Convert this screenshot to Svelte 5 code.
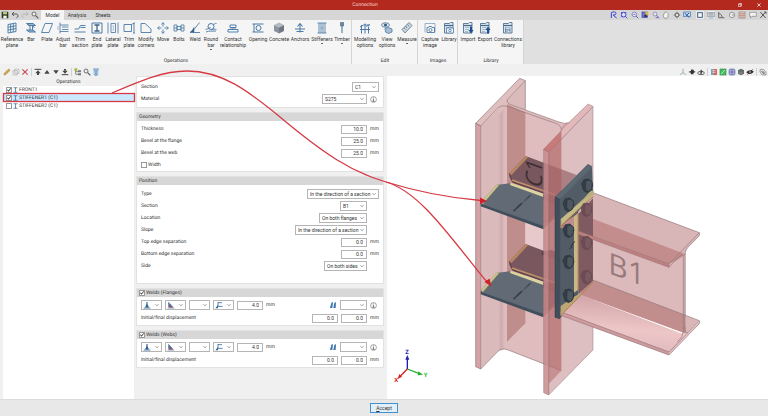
<script>
  const B = '#4b7ba6';
  const s = (d, w = 1.8, c = B, fill = 'none') =>
    `<path d="${d}" fill="${fill}" stroke="${c}" stroke-width="${w}" stroke-linejoin="round"/>`;
  const doc = s('M3 3h10l2-2h5v21H3z', 1.8, '#55738f', '#dfe9f2') + s('M3 7h17', 2.4, '#44698c') + s('M6 11h9M6 15h8M6 19h6', 1.2, '#7f9ab3');

  const icons = {
    ref: s('M4 5l16-3v17L4 22zM9.300 4v17M14.600 3v17M4 10.500l16-3M4 16l16-3', 1.9),
    bar: s('M3 3h13l5 4H8zM10 7v9M15 7v9M3 16h13l5 4H8zM5 5l5 3M16 9l3 2', 2, B, '#9db8cf'),
    plate: s('M8 3h15l-7 18H1z'),
    adjust: s('M6 1v22M6 6h17M10 10h13M10 15h13M6 19h17', 1.7) + s('M2 8v8', 1.4, '#86a6c3'),
    trimSection: s('M1 14h8l4-7h10M1 20h22M13 11h10', 1.9),
    endPlate: s('M2 2h20v20H2z', 2) + s('M7 6h10M12 6v12M7 18h10', 2.6, '#3d6486'),
    lateral: s('M2 1v22M22 1v22M8 3v18M17 3v18M8 3h9M8 21h9', 1.7) + s('M12.500 6v12', 1.4, '#86a6c3'),
    trimPlate: s('M2 5h15v14H2zM17 5l5-3v20M22 2h2M20 22h4'),
    modify: s('M2 21V3h8l12 11v7z'),
    move: s('M12 2v20M2 12h20M9 5l3-4 3 4M9 19l3 4 3-4M5 9l-4 3 4 3M19 9l4 3-4 3', 1.7) + '<circle cx="12" cy="12" r="3" fill="#f5f5f5"/>',
    bolts: s('M2 6h6v12H2zM2 12h6M8 9h8v6H8zM16 6h6v12h-6zM16 12h6', 1.7),
    weld: s('M21 1L10 15M2 21h20', 1.8) + s('M10 11v9H3l4-4z', 1, '#345f86', '#345f86'),
    round: s('M1 15c5-2 7-1 10-5M13 16c4-2 6-2 10-1M2 20c7-3 10-1 20-2M17 6c2-3 3-4 6-3', 1.8) + '<circle cx="12" cy="9" r="6" fill="none" stroke="#4b7ba6" stroke-width="2"/>',
    contact: s('M6 6h12v5H6zM2 15h20v5H2zM12 11v4', 1.9) + s('M6 13h12', 1.2, '#8daac4'),
    opening: s('M1 4h22M1 20h22M4 4v16', 2) + '<circle cx="13" cy="12" r="5" fill="none" stroke="#4b7ba6" stroke-width="2"/>',
    concrete: '<path d="M12 1l10 5-10 5L2 6z" fill="#b5bbc1"/><path d="M2 6l10 5v12L2 18z" fill="#8c959e"/><path d="M22 6l-10 5v12l10-5z" fill="#6f7983"/>',
    anchors: s('M12 3v18M2 14h20M7 9l5-6 5 6M5 19h14', 2.1),
    stiff: s('M3 2h18M3 22h18M6 2v20M18 2v20M10 2v20M14 2v20', 1.7) + s('M10 12h4', 1.5),
    timber: s('M9 1h6v7H9z', 1.6, '#5b7690', '#6f8aa3') + s('M12 8v14', 2.2),
    modelling: s('M5 23V6M12 23V3M19 23V9M2 10l7-4M9 6h13M2 15h20M15 9l6-4', 2),
    view: '<ellipse cx="9" cy="6" rx="8" ry="4.500" fill="#dbe6ef" stroke="#4b6f91" stroke-width="1.500"/><circle cx="9" cy="6" r="3" fill="#35597b"/>' + s('M8 13l7-2 7 3v6l-7 3-6-3z', 1.6, B, '#a8c0d5'),
    measure: s('M2 15L16 1l6 6L8 22zM6 12l3 3M9 8l3 4M13 5l3 3', 1.9, '#6f8799', '#c9d5df'),
    capture: s('M2 21V3h20v18', 1.5, '#7f9ab3') + s('M6 11h3l1-2h5l1 2h5v10H6z', 1.8) + '<circle cx="13" cy="16" r="3" fill="none" stroke="#4b7ba6" stroke-width="1.700"/>',
    lib: doc + s('M7 12h14v10H7zM11 12l2-2h3l2 2', 1.5, B, '#eef4f9') + '<circle cx="14" cy="17" r="2.500" fill="none" stroke="#4b7ba6" stroke-width="1.500"/>',
    import: doc + '<path d="M16 9h4v7h3l-5 7-5-7h3z" fill="#1f4f8c"/>',
    export: doc + '<path d="M16 23h4v-7h3l-5-7-5 7h3z" fill="#1f4f8c"/>',
    conn: doc + s('M7 11v10M16 11v10M7 16h9', 1.6),

    save: '<path d="M2 2h18l2 2v18H2z" fill="#2f3a1c"/><path d="M6 3h12v7H6z" fill="#b8c98a"/><path d="M7 14h10v8H7z" fill="#f3f3f3"/>',
    undo: s('M9 3L3 9l6 6M3 9h12c8 0 8 10 1 11', 2.6, '#454545'),
    redo: s('M15 3l6 6-6 6M21 9H9C1 9 1 19 8 20', 2, '#aaaaaa'),
    search: '<circle cx="9" cy="9" r="6" fill="#eee" stroke="#555" stroke-width="2.400"/>' + s('M14 14l8 8', 3.4, '#555'),
    zoomPrev: s('M4 21V5c6-4 14-3 14 2s-6 5-9 5l11 9', 3, '#3d3fd0'),
    zoomAll: '<circle cx="11" cy="11" r="7" fill="#d9e6ff" stroke="#4344c8" stroke-width="3"/>' + s('M3 3l4 4M19 3l-4 4M3 19l4-4M16 16l6 6', 2.4, '#3436d8'),
    zoomOut: '<circle cx="10" cy="10" r="7" fill="#eef" stroke="#66669c" stroke-width="2.200"/>' + s('M7 10h6M15 15l7 7', 2.4, '#4647b8'),
    zoomWin: '<rect x="3" y="3" width="16" height="16" fill="#6a76d8" stroke="#3334a8" stroke-width="2"/><path d="M13 2h9v11h-9z" fill="#e2b63d"/><path d="M8 16l7-7 3 10z" fill="#27273b"/>',
    zoomDyn: '<circle cx="9" cy="9" r="6" fill="#e3e3f4" stroke="#7a7aa0" stroke-width="2"/>' + s('M13 13l9 8M11 20h8', 2.4, '#5152c0'),
    hand: s('M6 21L3 12l3-1 1-7 3-1 2 1 3 0 3 3v9l-3 6z', 1.8, '#777', '#f2f2f2'),
    orbit: s('M12 2v20M2 12h20', 2, '#777') + '<circle cx="12" cy="12" r="6" fill="#ddd" stroke="#555" stroke-width="3"/>',
    redraw: '<rect x="2" y="3" width="20" height="14" fill="#bdd7ee" stroke="#4574a8" stroke-width="2"/>' + s('M5 6l14 14M18 6L9 15', 3, '#3258b5'),
    square: '<rect x="5" y="5" width="14" height="14" fill="#f6fbff" stroke="#4a6072" stroke-width="3"/>',
    keyboard: '<rect x="2" y="4" width="20" height="13" fill="#ddd" stroke="#8c979f" stroke-width="2"/>' + s('M5 8h14M5 12h14M4 21h16', 2, '#7c8993'),
    angle: s('M5 3v17h17M5 8c7 0 10 5 10 12', 2.6, '#5b5b5b'),
    clock: '<circle cx="12" cy="12" r="8" fill="#e9e9e9" stroke="#777" stroke-width="2"/>' + s('M12 12h6', 2, '#777'),
    table: '<rect x="3" y="3" width="18" height="18" fill="#e8dcd6" stroke="#8a7b75" stroke-width="2"/>' + s('M3 8h18M9 8v13M15 8v13M3 14h18', 2, '#b5806b'),
    comment: s('M2 4h20v12H9l-4 5v-5H2z', 1.8, '#777', '#f2f2f2'),
    tools: s('M4 3l16 18M20 3L4 21M16 3h5v5', 3, '#555'),
    pencil: s('M3 21l2-6L17 3l4 4L9 19z', 1.6, '#8a6d2b', '#d8ab3e'),
    copy: s('M8 3h13v13H8zM3 8h13v13H3z', 1.6, '#a2a2a2', '#ececec'),
    del: s('M4 4l16 16M20 4L4 20', 3.2, '#c8464e'),
    top: s('M2 4h20', 3, '#444') + '<path d="M12 7l8 9H4zM9 15h6v6H9z" fill="#444"/>',
    up: '<path d="M12 6l8 11H4z" fill="#444"/>',
    down: '<path d="M12 18l8-11H4z" fill="#444"/>',
    bottom: s('M2 20h20', 3, '#444') + '<path d="M12 17l8-9H4zM9 3h6v6H9z" fill="#444"/>',
    tree: s('M5 3v16h7M5 11h7', 2, '#5a6b3a') + '<path d="M1 1h9v7H1z" fill="#a8b53a"/><path d="M12 7h9v6h-9zM12 16h9v6h-9z" fill="#6d7a86"/>',
    filter: '<rect x="4" y="2" width="16" height="20" fill="#b8d5ee"/>' + s('M3 3h18M6 8h12M8 12h8M9 16h6v6H9z', 2.2, '#5b86b5'),
    beam: s('M4 3h16M12 3v18M4 21h16', 3.4, '#4b7ba6'),
    axes: s('M12 2v12l9 6M12 14l-9 6', 1.8, '#6c8893'),
    shadow: '<path d="M1 12l7-3 3-5 5 1 2 4 5 3-6 2-1 5H9l-1-5z" fill="#333"/>',
    eye: '<ellipse cx="12" cy="15" rx="10" ry="5" fill="none" stroke="#444" stroke-width="2.400"/><path d="M9 17l3-14 4 7-2 7z" fill="#444"/>',
    red: '<rect x="3" y="3" width="9" height="18" fill="#7fa3ae"/><rect x="12" y="3" width="9" height="18" fill="#e35c55"/>' + s('M7 8h10M7 13h10', 2, '#eee'),
    green: '<rect x="3" y="3" width="18" height="18" fill="#42bf5c" stroke="#3a8a62" stroke-width="2"/>' + s('M6 18L18 6', 3, '#a5f0a0'),
    violet: '<rect x="3" y="3" width="18" height="18" rx="4" fill="#a6abd6" stroke="#6a6da8" stroke-width="2"/>' + s('M3 12h18M12 3v18', 2, '#6a6da8'),
    cube: '<path d="M12 2l9 5v10l-9 5-9-5V7z" fill="#5d6a66"/><path d="M12 12l6-3v7l-6 3z" fill="#a5706f"/><path d="M5 9l6 3v6l-6-3z" fill="#5f93a6"/>',
    hide: '<path d="M1 13C5 5 18 5 23 10c-3 9-16 11-22 3z" fill="#333"/>' + s('M4 20L20 4', 2, '#222') + '<circle cx="12" cy="12" r="2.500" fill="#ddd"/>',
    history: s('M3 4h10l8 8v9H9L3 12z', 1.8, '#777', '#ddd') + s('M7 9l9 9M12 9v6h6', 2.2, '#666'),
    fillet: s('M12 3v18', 4, '#4b7ba6') + '<path d="M12 8l6 11H6z" fill="#2f5f92"/>' + s('M2 21h20', 3, '#4b7ba6'),
    weldType: '<path d="M4 2l15 17H4z" fill="#3f6d9c"/><path d="M8 12l10 8H7z" fill="#d14545"/>' + s('M2 21h20', 2.2, '#4b7ba6'),
    weldPos: s('M9 3v14M9 5h12M9 16h14', 2.6, '#3f73a5') + '<path d="M1 22l8-10v10z" fill="#2f5f92"/>',
    electrode: '<path d="M3 21L7 5l5-2-2 18zM13 21l3-15 5-3-1 18z" fill="#3e76ae"/>',
    info: '<circle cx="12" cy="12" r="10" fill="#fff" stroke="#555" stroke-width="1.800"/>' + s('M12 5v3M9 11h3v7M8 18h8', 2.2, '#444'),
  };

  const ribbon = [
    { name: 'Operations', items: [
      ['ref', 'Reference plane', 'w22'], ['bar', 'Bar', 'w16'], ['plate', 'Plate', 'w16'], ['adjust', 'Adjust bar', 'w16'],
      ['trimSection', 'Trim section', 'w18'], ['endPlate', 'End plate', 'w16'], ['lateral', 'Lateral plate', 'w16'],
      ['trimPlate', 'Trim plate', 'w16'], ['modify', 'Modify corners', 'w18'], ['move', 'Move', 'w16'], ['bolts', 'Bolts', 'w16'],
      ['weld', 'Weld', 'w16'], ['round', 'Round bar', 'w16', true], ['contact', 'Contact relationship', 'w28'],
      ['opening', 'Opening', 'w22'], ['concrete', 'Concrete', 'w20'], ['anchors', 'Anchors', 'w22'],
      ['stiff', 'Stiffeners', 'w22', true], ['timber', 'Timber', 'w18', true] ] },
    { name: 'Edit', items: [['modelling', 'Modelling options', 'w24'], ['view', 'View options', 'w20'], ['measure', 'Measure', 'w20', true]] },
    { name: 'Images', items: [['capture', 'Capture image', 'w22'], ['lib', 'Library', 'w16']] },
    { name: 'Library', items: [['import', 'Import', 'w18'], ['export', 'Export', 'w16'], ['conn', 'Connections library', 'w30']] },
  ];

  const quick = [['save', 'Save'], ['undo', 'Undo'], ['redo', 'Redo'], ['search', 'Search']];
  const zoomTools = [['zoomPrev', 'Previous view'], ['zoomAll', 'Zoom all'], ['zoomOut', 'Zoom out'], ['zoomWin', 'Zoom window'], ['zoomDyn', 'Dynamic zoom'], ['hand', 'Pan'], ['orbit', 'Orbit'], ['redraw', 'Redraw']];
  const drawTools = [['square', 'Snap', true], ['keyboard', 'Input', true], ['angle', 'Angle'], ['clock', 'Radius'], ['table', 'Table'], ['comment', 'Comment'], ['tools', 'Settings']];
  const editTools = [
    [['pencil', 'Edit'], ['copy', 'Copy'], ['del', 'Delete']],
    [['top', 'Move to top'], ['up', 'Move up'], ['down', 'Move down'], ['bottom', 'Move to bottom']],
    [['tree', 'Group'], ['search', 'Find'], ['filter', 'Filter']],
  ];
  const viewTools = [
    [['axes', 'Axes'], ['shadow', 'Shadows'], ['eye', 'Viewpoint']],
    [['red', 'Section view'], ['green', 'Solid view'], ['violet', 'Mesh view'], ['cube', 'Render'], ['hide', 'Hide']],
    [['history', 'History']],
  ];

  let operations = $state([
    { name: 'FRONT1', on: true },
    { name: 'STIFFENER1 (C1)', on: true },
    { name: 'STIFFENER2 (C1)', on: false },
  ]);

  const geometry = [['Thickness', '10.0'], ['Bevel at the flange', '25.0'], ['Bevel at the web', '25.0']];
  const position = [
    { label: 'Type', value: 'In the direction of a section', w: 's72', flush: true },
    { label: 'Section', value: 'B1', w: 's27' },
    { label: 'Location', value: 'On both flanges', w: 's48' },
    { label: 'Slope', value: 'In the direction of a section', w: 's72' },
    { label: 'Top edge separation', num: '0.0' },
    { label: 'Bottom edge separation', num: '0.0' },
    { label: 'Side', value: 'On both sides', w: 's43' },
  ];
  const weldIcons = [['fillet', 'Weld type'], ['weldType', 'Weld shape'], ['', 'Weld finish'], ['weldPos', 'Weld position']];

  const bolts = [[609, 378], [553, 435], [553, 513], [553, 607], [553, 708]];
  const farBolts = [[607, 450], [607, 550], [607, 652]];
</script>

{#snippet icon(name, cls)}
  <svg class={cls} viewBox="0 0 24 24" aria-hidden="true">{@html icons[name]}</svg>
{/snippet}

{#snippet tools(list)}
  {#each list as [name, label, active]}
    <button class="tool" class:active aria-label={label}>{@render icon(name, 'i8')}</button>
  {/each}
{/snippet}

{#snippet select(id, value, w, label)}
  <span class="select {w}">
    <select {id} aria-label={label}><option>{value}</option></select>
    <svg class="chev" viewBox="0 0 8 8" aria-hidden="true"><path d="M1 2.500l3 3 3-3" fill="none" stroke="#555" stroke-width="1.200" /></svg>
  </span>
{/snippet}

{#snippet stiffener(dy)}
  <g transform="translate(0 {dy})">
    <path d="M425 288L578 345L512 412L386 368L376 350V340z" fill="#79575f" />
    <path d="M376 340L425 288L432 292L382 346z" fill="#b5865f" />
    <path d="M376 340L386 366L512 412" fill="none" stroke="#46323a" stroke-width="2" />
    <path d="M384 360L512 404" fill="none" stroke="#c39368" stroke-width="4" />
    <path d="M290 430L343 374L378 370L478 406L478 500z" fill="#626a75" />
    <path d="M478 406L513 418V472L478 500z" fill="#775059" />
    <path d="M290 430L478 498V508L290 439z" fill="#3f4f5c" />
    <path d="M478 498L513 462V474L478 508z" fill="#9b6650" />
    <path d="M292 426L339 373L345 376L296 433z" fill="#cfc68a" stroke="#8c8560" stroke-width="1" />
    <path d="M380 368L478 402V411L378 375z" fill="#ddd49e" />
    <path d="M389 453L440 405" stroke="#2d353d" stroke-width="4" stroke-dasharray="3 2 4 2 26 5" opacity=".6" />
    <path d="M389 453L412 431" stroke="#2d353d" stroke-width="5" stroke-dasharray="3 2" />
    <path d="M478 403l26 4 8 6v22l-18-8-16-5z" fill="#6a4149" />
  </g>
{/snippet}

{#snippet bolt(x, y, side, face, edge)}
  <g transform="translate({x} {y})" stroke={edge} stroke-width="2">
    <path d="M-16 -6L-9 -19L4 -21L13 -14L17 -2L11 14L0 20L-10 14z" fill={side} />
    <path d="M-4 -15L6 -18L16 -11L14 8L5 18L-5 9z" fill={face} />
  </g>
{/snippet}

{#snippet weldPanel(title)}
  <section class="panel">
    <h2><label><input type="checkbox" checked />{title}</label></h2>
    <div class="rows weld">
      <div class="row">
        {#each weldIcons as [name, label]}
          <span class="select s21">
            <select aria-label={label}><option></option></select>
            {#if name}{@render icon(name, 'lead')}{/if}
            <svg class="chev" viewBox="0 0 8 8" aria-hidden="true"><path d="M1 2.500l3 3 3-3" fill="none" stroke="#555" stroke-width="1.200" /></svg>
          </span>
        {/each}
        <input type="text" value="4.0" aria-label="{title} thickness" />
        <span class="unit">mm</span>
        <span class="grow"></span>
        {@render icon('electrode', 'i8')}
        {@render select(undefined, '', 's27', `${title} electrode`)}
        <span class="tail"><button class="tool" aria-label="Information">{@render icon('info', 'i7')}</button></span>
      </div>
      <div class="row">
        <span class="grow">Initial/final displacement</span>
        <input type="text" value="0.0" aria-label="Initial displacement" />
        <input type="text" value="0.0" aria-label="Final displacement" />
        <span class="tail">mm</span>
      </div>
    </div>
  </section>
{/snippet}

<div class="app">
  <header class="title">
    <h1>Connection</h1>
    <button class="win" aria-label="Restore"><svg viewBox="0 0 10 10"><path d="M1 3h6v6H1zM3 3V1h6v6H7" fill="none" stroke="#fff" stroke-width="1.500" /></svg></button>
    <button class="win" aria-label="Close"><svg viewBox="0 0 10 10"><path d="M1 1l8 8M9 1L1 9" fill="none" stroke="#fff" stroke-width="1.800" /></svg></button>
  </header>

  <nav class="tabs">
    <div class="quick">{@render tools(quick)}</div>
    <button class="tab current">Model</button>
    <button class="tab">Analysis</button>
    <button class="tab">Sheets</button>
    <span class="grow"></span>
    <div class="zooms">{@render tools(zoomTools)}</div>
    <div class="draws">{@render tools(drawTools)}</div>
  </nav>

  <div class="ribbon">
    {#each ribbon as group}
      <section class="group">
        <div class="cmds">
          {#each group.items as [name, label, width, more]}
            <button class="cmd {width}">
              {@render icon(name, 'i12')}
              <span>{label}</span>
              {#if more}<i></i>{/if}
            </button>
          {/each}
        </div>
        <h2>{group.name}</h2>
      </section>
    {/each}
  </div>

  <div class="strip">
    {#each editTools as list}<div class="set">{@render tools(list)}</div>{/each}
    <span class="grow"></span>
    {#each viewTools as list}<div class="set">{@render tools(list)}</div>{/each}
  </div>

  <main>
    <aside>
      <h2>Operations</h2>
      <ul>
        {#each operations as op, n}
          <li class:selected={n === 1}>
            <label><input type="checkbox" bind:checked={op.on} />{@render icon('beam', 'i7')}<span>{op.name}</span></label>
          </li>
        {/each}
      </ul>
    </aside>

    <form onsubmit={(e) => e.preventDefault()}>
      <section class="panel first">
        <div class="rows">
          <div class="row"><label for="sec">Section</label>{@render select('sec', 'C1', 's27')}</div>
          <div class="row">
            <label for="mat">Material</label>{@render select('mat', 'S275', 's45')}
            <span class="tail"><button class="tool" aria-label="Information">{@render icon('info', 'i7')}</button></span>
          </div>
        </div>
      </section>

      <section class="panel">
        <h2>Geometry</h2>
        <div class="rows">
          {#each geometry as [label, value], n}
            <div class="row"><label for="geo{n}">{label}</label><input id="geo{n}" type="text" {value} /><span class="tail">mm</span></div>
          {/each}
          <div class="row"><label class="tick"><input type="checkbox" />Width</label></div>
        </div>
      </section>

      <section class="panel tall">
        <h2>Position</h2>
        <div class="rows">
          {#each position as p, n}
            <div class="row">
              <label for="pos{n}">{p.label}</label>
              {#if p.num}<input id="pos{n}" type="text" value={p.num} />{:else}{@render select(`pos${n}`, p.value, p.w)}{/if}
              {#if !p.flush}<span class="tail">{p.num ? 'mm' : ''}</span>{/if}
            </div>
          {/each}
        </div>
      </section>

      {@render weldPanel('Welds (Flanges)')}
      {@render weldPanel('Welds (Webs)')}
    </form>

    <div class="view">
      <svg viewBox="9 48 1143 969" preserveAspectRatio="xMinYMin meet" role="img" aria-label="3D view of the connection">
        <defs>
          <linearGradient id="fil" x1="0" x2="1"><stop offset="0" stop-color="#b89aa2" stop-opacity="0" /><stop offset=".4" stop-color="#b89aa2" stop-opacity=".5" /><stop offset="1" stop-color="#e8c2c3" stop-opacity="0" /></linearGradient>
          <linearGradient id="shine" x1="0" y1="0" x2="-.15" y2="1"><stop offset="0" stop-color="#d2a6a8" /><stop offset=".5" stop-color="#edc6c8" /><stop offset="1" stop-color="#d9b4b6" /></linearGradient>
        </defs>

        <!-- column: rear flange and web -->
        <path d="M290 198L424 62V790L369 845V867Q352 865 342 874L290 927z" fill="#dbbabb" />
        <path d="M345 139L369 118Q367 130 380 134L525 186Q540 193 556 188L532 212V932L370 869Q352 864 342 874z" fill="#dfbcbd" />
        <path d="M342 165L368 139V868L342 874z" fill="url(#fil)" />
        <path d="M369 133L424 157V790L369 845z" fill="#bf8d8b" />
        <path d="M424 470H480V600H424z" fill="#e8c9cb" />
        <g stroke="#94777a" stroke-width="2" stroke-linejoin="round">
          <path d="M275 190L407 55L424 62L369 118L369 122L342 143L290 198z" fill="#dfbfc0" stroke="none" />
          <path d="M275 190L290 198V927L275 920z" fill="#d3a3a6" />
          <path d="M424 62V149M290 927L342 874Q352 863 370 869L532 932M290 198L275 190L407 55L424 62M290 198L342 143Q353 134 370 139L518 191Q532 197 532 212M424 62L370 118Q367 130 380 134L525 186Q540 193 556 188" fill="none" />
        </g>

        {@render stiffener(0)}
        {@render stiffener(264)}
        <path d="M474 574l30-4 9 6v22l-24-10-16-4z" fill="#57404a" />

        <!-- front flange -->
        <path d="M494 277L627 140V870L494 1005z" fill="#c9979b" fill-opacity=".62" stroke="#94777a" stroke-width="1.500" />
        <path d="M479 268L532 212V932L494 972V277z" fill="#a8524f" fill-opacity=".42" />
        <path d="M479 268L532 212Q536 194 552 190L612 132L627 139L494 277z" fill="#d79a9d" fill-opacity=".7" stroke="#94777a" stroke-width="1.500" />
        <path d="M479 268L494 277V1005L479 998z" fill="#c98a8c" fill-opacity=".85" stroke="#94777a" stroke-width="1.500" />
        <path d="M479 268L532 214V238L494 277z" fill="#c06d6c" fill-opacity=".7" />
        <text transform="translate(474 388) rotate(-90) skewX(-20)" class="mark dark">C1</text>

        <!-- end plate -->
        <path d="M513 412L612 313L624 320L527 418z" fill="#5b6973" stroke="#2f3c46" stroke-width="1.500" />
        <path d="M527 418L624 320L627 402V660L527 776z" fill="#515c67" />
        <path d="M513 412L527 418V776L513 772z" fill="#3d4e5c" stroke="#2f3c46" stroke-width="1.500" />

        <!-- beam -->
        <path d="M627 398L946 518V527L911 563Q903 572 903 590L583 515V455z" fill="#d8b5b7" />
        <path d="M627 398L946 518L855 612L583 515V455z" fill="#d8b5b7" />
        <path d="M627 660L946 782L911 820H903L583 702z" fill="#d9b7b9" />
        <path d="M583 462L905 583V820L583 702z" fill="#dcbabc" />
        <path d="M583 460L905 583L880 600L855 612L530 494z" fill="#c28d8c" />
        <path d="M627 660L903 765V820L583 702z" fill="#c28e8d" />
        <path d="M583 702L890 820Q905 818 911 820L946 785V791L855 885L530 766z" fill="url(#shine)" />
        <path d="M583 462L627 415V664L583 702z" fill="#7e5a61" />
        <path d="M530 494L855 612V622L530 503z" fill="#c27f80" />
        <path d="M530 755L855 875V885L530 766z" fill="#cf9a9c" />
        <g fill="none" stroke="#94777a" stroke-width="2" stroke-linejoin="round">
          <path d="M627 398L946 518V527L911 563Q903 572 903 585V820M530 494L855 612L946 518M855 612V622L530 503M855 622L880 594Q898 578 898 592V812Q898 832 880 846M627 660L946 782V791L855 885L530 766M530 755L855 876L946 783M903 800Q904 820 911 819" />
        </g>
        <path d="M530 478L600 415L620 392L629 393V406L537 492L530 503z" fill="#b9ae7c" />
        <path d="M530 478L585 432L629 400L537 490z" fill="#cfc58e" fill-opacity=".6" />
        <path d="M529 500L628 410" stroke="#a4673f" stroke-width="2.500" />
        <path d="M570 470L582 459V690L570 698z" fill="#c9b985" />
        <path d="M582 460V690" stroke="#b5835a" stroke-width="3" />
        <path d="M530 738L570 710L600 695L628 662V668L530 768z" fill="#bda873" />
        <path d="M529 768L628 666" stroke="#a4673f" stroke-width="2" />
        <path d="M556 566l7-4 2-12 8-5" fill="none" stroke="#2b343c" stroke-width="3" />
        {#each farBolts as [x, y]}{@render bolt(x, y, '#6c4b53', '#795860', '#674850')}{/each}
        {#each bolts as [x, y]}{@render bolt(x, y, '#333e47', '#4d5760', '#283139')}{/each}
        <text transform="translate(673 640) skewY(20)" class="mark">B1</text>

        <!-- axes -->
        <g stroke-width="4">
          <path d="M70 927V892" stroke="#2020b0" /><path d="M64 899L70 885L76 899z" fill="#2020b0" />
          <path d="M70 927L104 940" stroke="#22b030" /><path d="M103 934L117 944L101 946z" fill="#22b030" />
          <path d="M70 927L50 947" stroke="#d02020" /><path d="M46 942L54 950L41 957z" fill="#d02020" />
        </g>
        <text x="64" y="881" class="axis" fill="#2222c8">Z</text>
        <text x="119" y="952" class="axis" fill="#22c030">Y</text>
        <text x="31" y="967" class="axis" fill="#e02020">X</text>
      </svg>
    </div>
  </main>

  <footer><button class="accept"><u>A</u>ccept</button></footer>

  <svg class="callout" viewBox="0 0 768 416" preserveAspectRatio="xMinYMin meet" aria-hidden="true">
    <g fill="none" stroke="#d63a45" stroke-width="1.300">
      <rect x="3.500" y="93.500" width="131" height="8" />
      <path d="M112 93C140 81 163 71 187 71C222 71 248 91 277 114.500C325 155 352 172 386 182C415 191 450 198 481 200.500" />
      <path d="M386 182C421 192 452 240 487 282" />
    </g>
    <path d="M480 197.500L487 201L480 204zM484.500 282L491.500 286.500L489.500 278.500z" fill="#cf202c" />
  </svg>
</div>

<style>
  :global(body) { margin: 0; }
  .app {
    position: relative;
    display: flex;
    flex-direction: column;
    min-height: 100vh;
    background: #f0f0f0;
    color: #333;
    font: 5px/6px Roboto, "Noto Sans", sans-serif;
    text-rendering: geometricPrecision;
  }
  .app :global(*) { box-sizing: border-box; }
  h1, h2, ul { margin: 0; padding: 0; font: inherit; list-style: none; }
  button, input, select { margin: 0; padding: 0; border: 0; background: none; color: inherit; font: inherit; }
  svg { display: block; }
  .grow { flex: 1; }
  .i7 { width: 7px; height: 7px; }
  .i8 { width: 8px; height: 8px; }
  .i12 { width: 12px; height: 12px; }
  .tool { display: block; flex: none; }
  .tool.active { background: #e3eff5; }

  .title { display: flex; align-items: center; height: 10px; background: #b3291d; color: #f3d8d4; }
  .title h1 { flex: 1; text-align: center; line-height: 8px; }
  .win { width: 19px; display: flex; justify-content: center; }
  .win svg { width: 4px; height: 4px; }

  .tabs { display: flex; align-items: center; height: 10px; background: #d6d6d6; }
  .quick { display: flex; gap: 2px; width: 41px; padding-left: 1px; }
  .tab { width: 26px; height: 10px; text-align: center; }
  .tab.current { width: 23px; background: #f5f5f5; }
  .zooms, .draws { display: flex; justify-content: space-between; }
  .zooms { width: 81px; margin-right: 5px; }
  .draws { width: 71px; margin-right: 1px; }

  .ribbon { display: flex; height: 44px; background: #e0e0e0; }
  .group { display: flex; flex-direction: column; justify-content: space-between; padding-left: 1px; border-right: 1px solid #d4d4d4; background: #f5f5f5; }
  .group h2 { text-align: center; line-height: 5px; }
  .cmds { display: flex; padding-top: 2px; }
  .cmd { display: flex; flex-direction: column; align-items: center; line-height: 6px; }
  .cmd span { margin-top: 2px; width: min-content; text-align: center; }
  .cmd i { width: 2px; height: 1px; margin-top: 1px; background: #666; }
  .w16 { width: 16px; } .w18 { width: 18px; } .w20 { width: 20px; } .w22 { width: 22px; }
  .w24 { width: 24px; } .w28 { width: 28px; } .w30 { width: 30px; }

  .strip { display: flex; align-items: end; height: 12px; padding: 0 1px 0 3px; }
  .set { display: flex; gap: 1px; padding-right: 2px; }
  .set:last-child { padding-right: 0; }
  .set + .set { border-left: 1px solid #d0d0d0; padding-left: 2px; }

  main { flex: 1; display: flex; align-items: stretch; }
  aside { display: flex; flex-direction: column; width: 136px; padding: 2px 2px 0 3px; }
  aside h2 { height: 8px; text-align: center; line-height: 8px; }
  aside ul { flex: 1; background: #fff; }
  li label { display: flex; align-items: center; height: 8px; padding-left: 3px; }
  li label span { line-height: 8px; }
  li .i7 { height: 6px; }
  li.selected { background: #cce8ff; }

  form { width: 251px; padding-right: 3px; }
  .panel { margin-bottom: 4px; border: 1px solid #e2e2e2; background: #fff; }
  .panel h2 { height: 8px; padding-left: 2px; background: #d7d7d7; line-height: 8px; }
  .panel h2 label { display: flex; align-items: center; gap: 1px; height: 8px; }
  .rows { padding: 2px 4px 0; }
  .first .rows { padding: 4px 4px 2px; }
  .tall .rows { padding: 3px 4px 11px; }
  .weld.rows { display: grid; gap: 1px; padding: 2px 4px 1px; }
  .row { display: flex; align-items: center; height: 12px; gap: 3px; }
  .row > label { flex: 1; }
  .tick { display: flex; align-items: center; gap: 1px; }
  .tail { width: 9px; }
  .unit { width: 10px; }
  input[type='text'] { width: 26px; height: 9px; padding: 0 3px; border: 1px solid #b5b5b5; background: #fff; text-align: right; }
  input[type='checkbox'] { appearance: none; display: grid; flex: none; width: 6px; height: 6px; border: 1px solid #999; background: #fff; }
  input[type='checkbox']:checked::before { content: ''; background: #333; clip-path: polygon(0 50%, 20% 35%, 40% 60%, 85% 0, 100% 15%, 40% 95%); }
  .select { display: grid; align-items: center; height: 10px; border: 1px solid #b5b5b5; background: #fff; }
  .select > :global(*) { grid-area: 1 / 1; }
  select { appearance: none; width: 100%; height: 8px; padding-left: 2px; line-height: 8px; outline: 0; }
  .chev { width: 4px; height: 4px; margin-right: 2px; justify-self: end; pointer-events: none; }
  .lead { width: 8px; height: 8px; margin-left: 1px; pointer-events: none; }
  .s21 { width: 21px; } .s27 { width: 27px; } .s43 { width: 43px; } .s45 { width: 45px; } .s48 { width: 48px; } .s72 { width: 72px; }

  .view { flex: 1; min-width: 0; background: #fff; }
  .view > svg { width: 100%; }
  .mark { font: 90px "Open Sans", "Noto Sans", sans-serif; fill: #5d4347; fill-opacity: .55; }
  .mark.dark { font-size: 68px; fill: #2e1f25; fill-opacity: .75; }
  .axis { font: bold 18px "Open Sans", "Noto Sans", sans-serif; }

  footer { display: flex; justify-content: center; align-items: center; height: 17px; background: #e8e8e8; border-top: 1px solid #dcdcdc; }
  .accept { width: 28px; height: 10px; border: 1px solid #3d92d6; background: #e4eef6; text-align: center; line-height: 8px; }
  .callout { position: absolute; inset: 0; width: 100%; height: 100%; pointer-events: none; }
</style>
